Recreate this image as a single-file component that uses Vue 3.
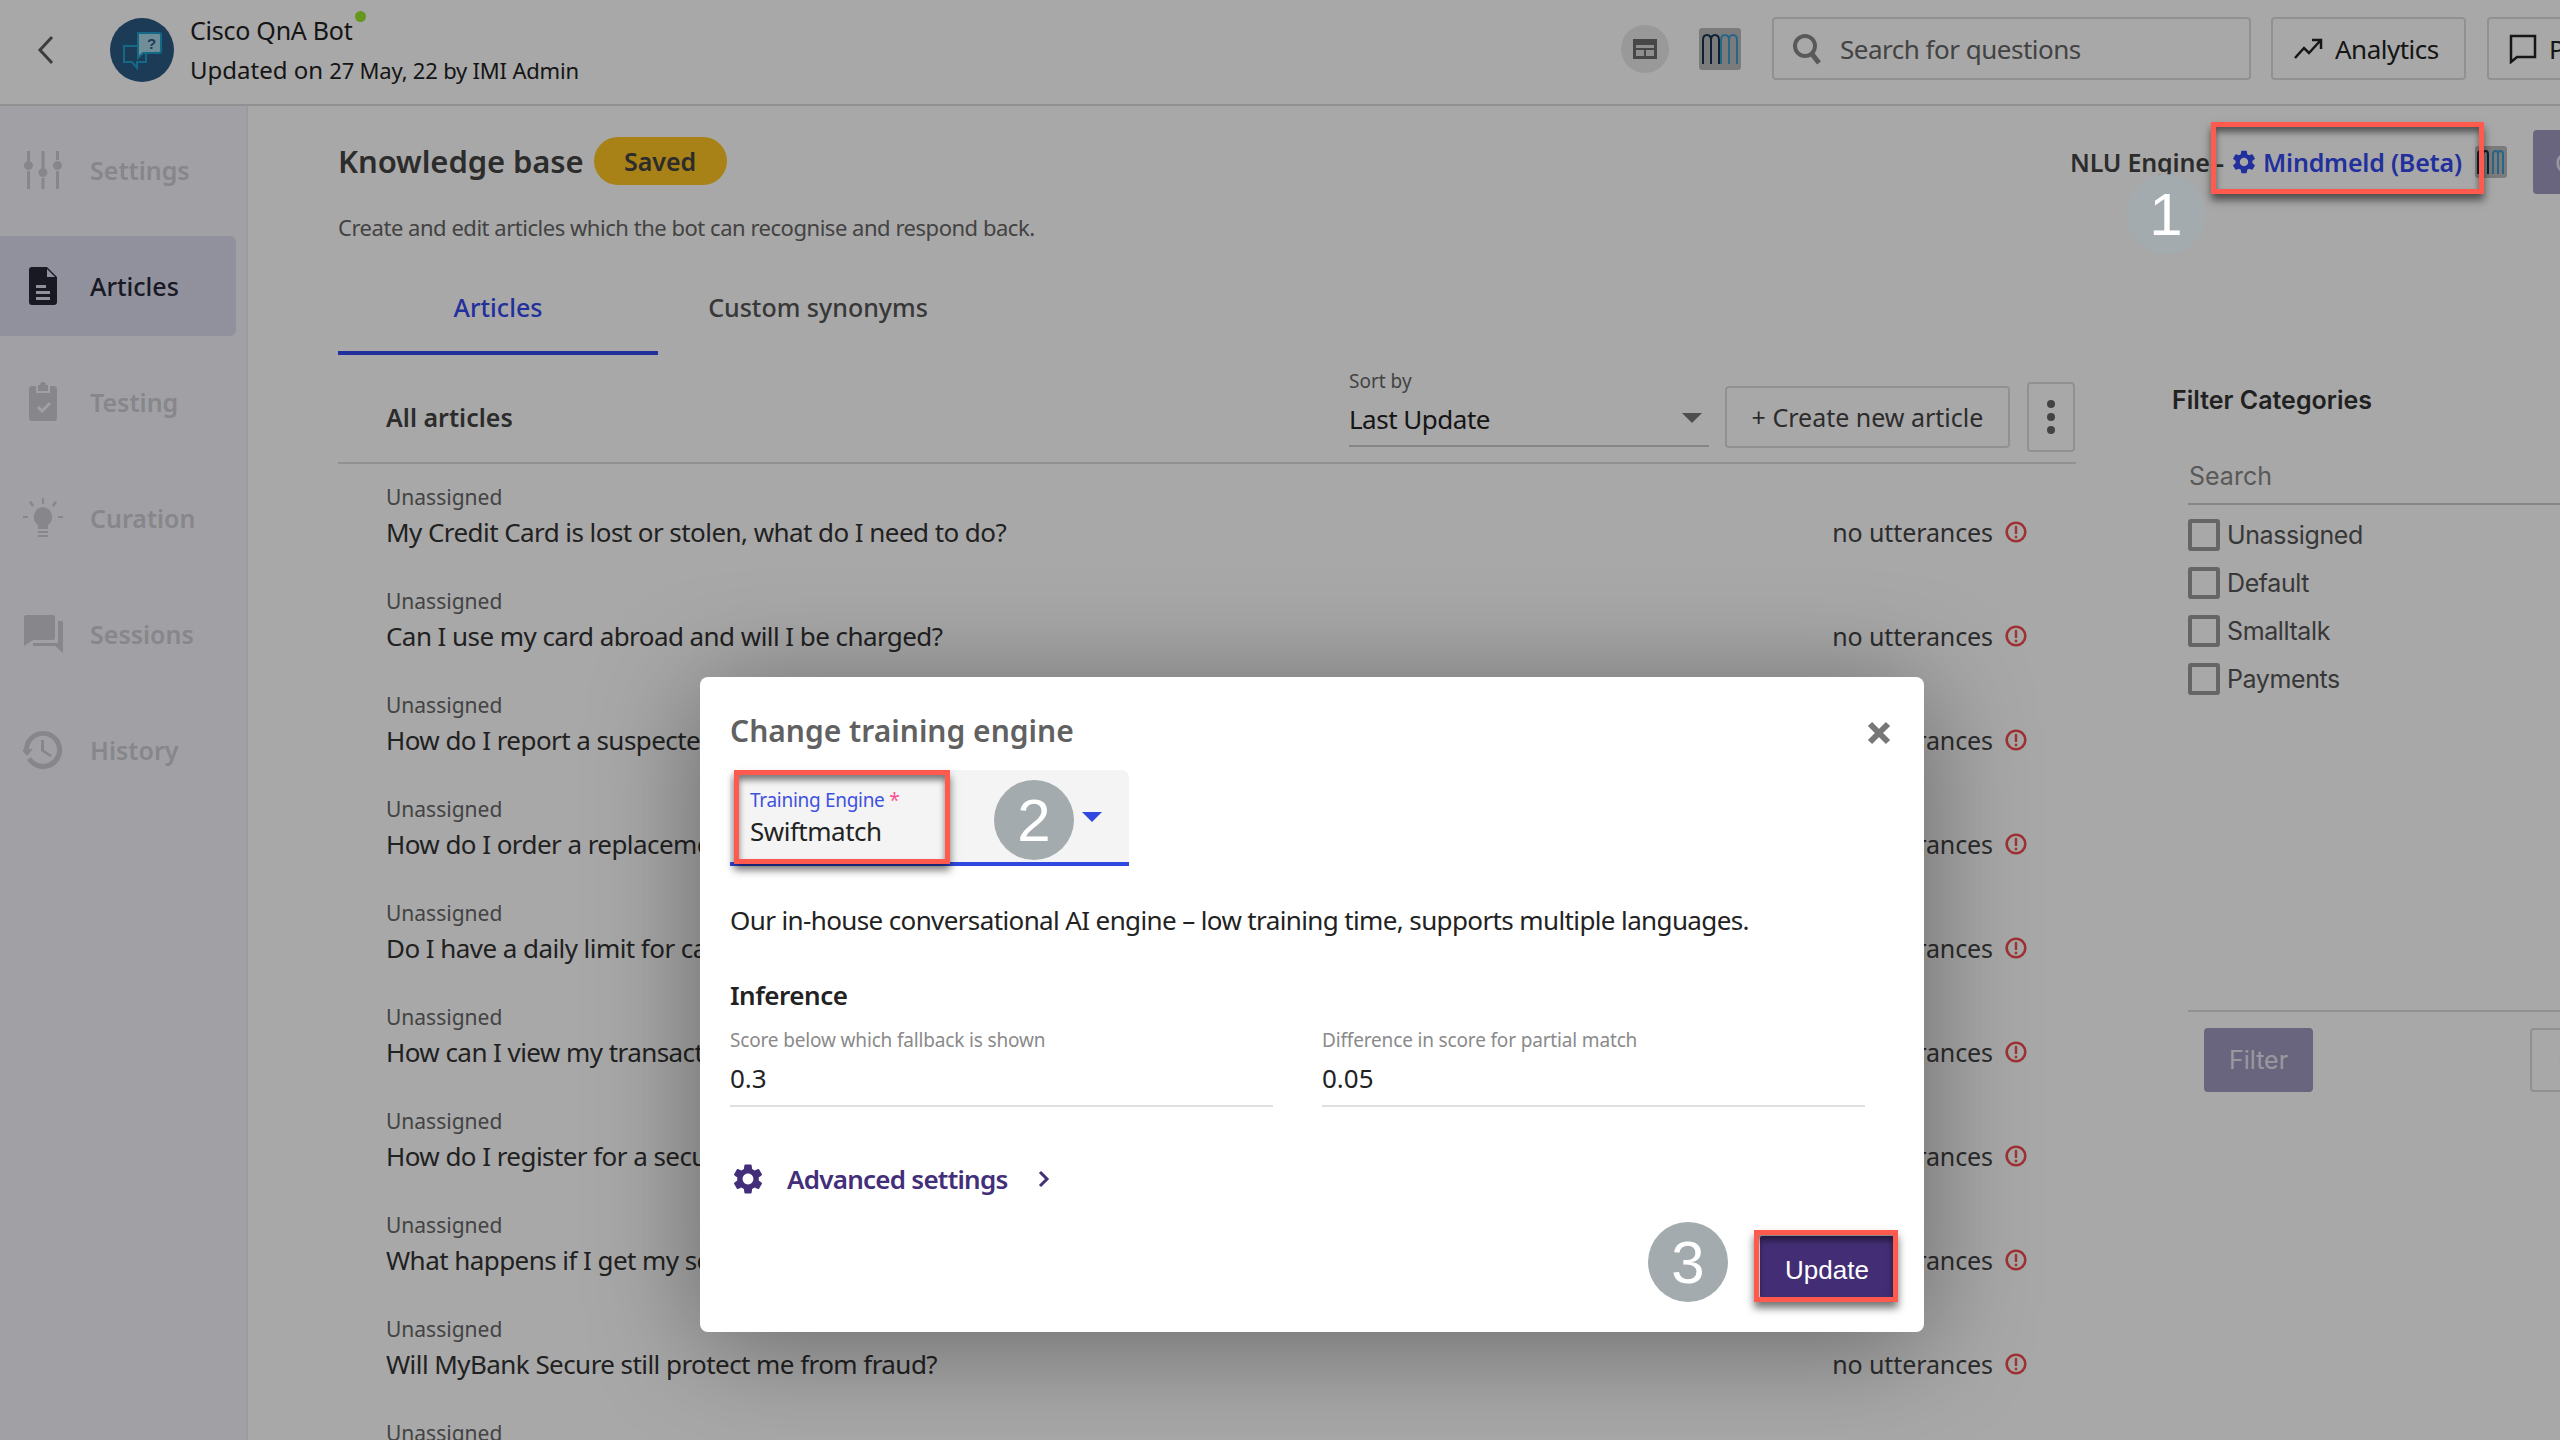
<template>
  <div class="page">
    <header class="topbar">
      <div class="top-left">
        <svg class="back" viewBox="0 0 20 32" width="20" height="32"><path d="M16 3 4 16l12 13" fill="none" stroke="#5d5d5d" stroke-width="3" /></svg>
        <svg class="avatar" viewBox="0 0 64 64" width="64" height="64">
          <circle cx="32" cy="32" r="32" fill="#2a5a85" />
          <path d="M14 28h22v16H27v6l-5-6h-8z" fill="none" stroke="#1ea0cc" stroke-width="2" />
          <path d="M28 15h21a2 2 0 0 1 2 2v16a2 2 0 0 1-2 2H33l-5 5z" fill="#a9d8ea" stroke="#1ea0cc" stroke-width="2" />
          <text x="37" y="31" font-size="15" font-weight="700" fill="#2a5a85" font-family="Liberation Sans">?</text>
        </svg>
        <div class="bot-info">
          <div class="bot-name">Cisco QnA Bot<span class="online"></span></div>
          <div class="bot-sub">Updated on <small>27 May, 22 by IMI Admin</small></div>
        </div>
      </div>
      <div class="top-right">
        <span class="round-icon">
          <svg viewBox="0 0 28 28" width="28" height="28"><path d="M2 4h24v20H2z" fill="#6d6d6d" /><path d="M5 10h18v3H5zM5 15h8v6H5zM15 15h8v6h-8z" fill="#d8d8d8" /></svg>
        </span>
        <svg class="mm" viewBox="0 0 42 42" width="42" height="42">
          <rect width="42" height="42" rx="3" fill="#bbb" />
          <path d="M4 36V12q0-5 4-5t4 5v24M12 12q0-5 4-5t4 5v24" fill="none" stroke="#16324f" stroke-width="2" />
          <path d="M22 36V12q0-5 4-5t4 5v24M30 12q0-5 4-5t4 5v24" fill="none" stroke="#3c9ad0" stroke-width="2" />
        </svg>
        <div class="search-box">
          <svg viewBox="0 0 34 34" width="34" height="34"><circle cx="15" cy="14" r="10" fill="none" stroke="#888" stroke-width="4" /><path d="m22 22 7 9" stroke="#888" stroke-width="5" /></svg>
          <span>Search for questions</span>
        </div>
        <button class="top-btn analytics">
          <svg viewBox="0 0 30 24" width="30" height="24"><path d="m2 21 9-10 5 5L27 4M19 3h9v9" fill="none" stroke="#222" stroke-width="2.5" /></svg>
          Analytics
        </button>
        <button class="top-btn">
          <svg viewBox="0 0 28 30" width="28" height="30"><path d="M2 2h24v21H8l-6 5z" fill="none" stroke="#222" stroke-width="2.5" /></svg>
          Preview
        </button>
      </div>
    </header>

    <div class="body">
      <aside class="sidebar">
        <div v-for="item in navItems" :key="item.name" class="nav-item" :class="{ active: item.active }">
          <span class="nav-icon">
            <svg viewBox="0 0 40 40" width="40" height="40"><path :d="item.icon" fill="currentColor" fill-rule="evenodd" /></svg>
          </span>
          <span>{{ item.name }}</span>
        </div>
      </aside>

      <main class="content">
        <div class="title-row">
          <h1>Knowledge base</h1>
          <span class="saved">Saved</span>
          <div class="engine">
            <span class="engine-label">NLU Engine -</span>
            <svg viewBox="0 0 24 24" width="28" height="28"><path :d="gearPath" fill="#3549ee" /></svg>
            <span class="engine-name">Mindmeld (Beta)</span>
            <svg class="mm-small" viewBox="0 0 32 32" width="32" height="32">
              <rect width="32" height="32" rx="3" fill="#bbb" />
              <path d="M3 28V8q0-3 2.500-3T8 8v20M8 8q0-3 2.500-3T13 8v20" fill="none" stroke="#16324f" stroke-width="2" />
              <path d="M18 28V8q0-3 2.500-3T23 8v20M23 8q0-3 2.500-3T28 8v20" fill="none" stroke="#3c9ad0" stroke-width="2" />
            </svg>
            <button class="train-btn">Confirm</button>
          </div>
        </div>
        <p class="subtitle">Create and edit articles which the bot can recognise and respond back.</p>

        <div class="tabs">
          <div class="tab active">Articles</div>
          <div class="tab">Custom synonyms</div>
        </div>

        <div class="columns">
          <section class="articles">
            <div class="toolbar">
              <span class="all-label">All articles</span>
              <div class="sort">
                <div class="sort-label">Sort by</div>
                <div class="sort-value">Last Update<i class="sort-arrow"></i></div>
              </div>
              <button class="create-btn">+ Create new article</button>
              <button class="more-btn"><i></i><i></i><i></i></button>
            </div>
            <div v-for="(q, i) in questions" :key="i" class="row">
              <div class="row-cat">Unassigned</div>
              <div v-if="q" class="row-line">
                <span class="row-q">{{ q }}</span>
                <span class="no-utt">no utterances</span>
                <svg viewBox="0 0 22 22" width="22" height="22">
                  <circle cx="11" cy="11" r="9.300" fill="none" stroke="#f24c4c" stroke-width="2.600" />
                  <path d="M9.800 5h2.400v8H9.800zM9.800 14.800h2.400v2.400H9.800z" fill="#f24c4c" />
                </svg>
              </div>
            </div>
          </section>

          <section class="filter">
            <h3>Filter Categories</h3>
            <div class="filter-panel">
              <div class="filter-search">Search</div>
              <div class="filter-list">
                <label v-for="c in categories" :key="c" class="check"><i></i>{{ c }}</label>
              </div>
              <div class="filter-foot">
                <button class="filter-btn">Filter</button>
                <button class="clear-btn">Clear</button>
              </div>
            </div>
          </section>
        </div>
      </main>
    </div>

    <div class="backdrop"></div>

    <div class="dialog">
      <h2>Change training engine</h2>
      <svg class="close" viewBox="0 0 24 24" width="24" height="24"><path d="M3 3l18 18M21 3 3 21" stroke="#777" stroke-width="6" /></svg>
      <div class="engine-select">
        <div class="select-label">Training Engine <b>*</b></div>
        <div class="select-value">Swiftmatch</div>
        <i class="select-arrow"></i>
      </div>
      <p class="desc">Our in-house conversational AI engine – low training time, supports multiple languages.</p>
      <div class="section-title">Inference</div>
      <div class="fields">
        <div class="field">
          <div class="field-label">Score below which fallback is shown</div>
          <div class="field-value">0.3</div>
        </div>
        <div class="field">
          <div class="field-label">Difference in score for partial match</div>
          <div class="field-value">0.05</div>
        </div>
      </div>
      <div class="advanced">
        <svg viewBox="0 0 24 24" width="36" height="36"><path :d="gearPath" fill="#432e7a" /></svg>
        <span>Advanced settings</span>
        <svg class="chev" viewBox="0 0 12 18" width="12" height="18"><path d="m2 2 7 7-7 7" fill="none" stroke="#432e7a" stroke-width="3" /></svg>
      </div>
      <div class="dialog-foot">
        <button class="update-btn">Update</button>
      </div>
    </div>

    <!-- annotations on top of the screenshot -->
    <div class="mark mark-1"></div>
    <div class="mark mark-2"></div>
    <div class="mark mark-3"></div>
    <div class="step step-1">1</div>
    <div class="step step-2">2</div>
    <div class="step step-3">3</div>
  </div>
</template>

<script setup>
const gearPath = 'M19.14 12.94c.04-.3.06-.61.06-.94 0-.32-.02-.64-.07-.94l2.03-1.58c.18-.14.23-.41.12-.61l-1.92-3.32c-.12-.22-.37-.29-.59-.22l-2.39.96c-.5-.38-1.03-.7-1.62-.94l-.36-2.54c-.04-.24-.24-.41-.48-.41h-3.84c-.24 0-.43.17-.47.41l-.36 2.54c-.59.24-1.13.57-1.62.94l-2.39-.96c-.22-.08-.47 0-.59.22L2.74 8.87c-.12.21-.08.47.12.61l2.03 1.58c-.05.3-.09.63-.09.94s.02.64.07.94l-2.03 1.58c-.18.14-.23.41-.12.61l1.92 3.32c.12.22.37.29.59.22l2.39-.96c.5.38 1.03.7 1.62.94l.36 2.54c.05.24.24.41.48.41h3.84c.24 0 .44-.17.47-.41l.36-2.54c.59-.24 1.13-.56 1.62-.94l2.39.96c.22.08.47 0 .59-.22l1.92-3.32c.12-.22.07-.47-.12-.61l-2.01-1.58zM12 15.6c-1.98 0-3.6-1.62-3.6-3.6s1.62-3.6 3.6-3.6 3.6 1.62 3.6 3.6-1.62 3.6-3.6 3.6z'

const navItems = [
  {
    name: 'Settings',
    icon: 'M4 1h3v10H4zM5.500 11a4.500 4.500 0 1 1 0 9 4.500 4.500 0 0 1 0-9zM4 21h3v18H4zM18.500 1h3v17h-3zM20 18a4.500 4.500 0 1 1 0 9 4.500 4.500 0 0 1 0-9zM18.500 28h3v11h-3zM33 1h3v9h-3zM34.500 11a4.500 4.500 0 1 1 0 9 4.500 4.500 0 0 1 0-9zM33 21h3v18h-3z',
  },
  {
    name: 'Articles',
    active: true,
    icon: 'M9 1h15l10 10v25a3 3 0 0 1-3 3H9a3 3 0 0 1-3-3V4a3 3 0 0 1 3-3zM24 3v8h8zM13 19v3h10v-3zM13 25v3h14v-3zM13 31v3h14v-3z',
  },
  {
    name: 'Testing',
    icon: 'M20 0a3 3 0 0 1 3 3h2v6H15V3h2a3 3 0 0 1 3-3zM9 4h4v7h14V4h4a3 3 0 0 1 3 3v29a3 3 0 0 1-3 3H9a3 3 0 0 1-3-3V7a3 3 0 0 1 3-3zM14 26l5 5 9-9-2-2-7 7-3-3z',
  },
  {
    name: 'Curation',
    icon: 'M19 0h2v6h-2zM6 4l2-1 3 4-2 2zM32 3l2 1-3 5-2-2zM0 18h5v2H0zM35 18h5v2h-5zM20 9a10 10 0 0 1 5 18v4H15v-4a10 10 0 0 1 5-18zM15 33h10v2H15zM15 37h10v2H15z',
  },
  {
    name: 'Sessions',
    icon: 'M3 1h27a2 2 0 0 1 2 2v21a2 2 0 0 1-2 2H10l-9 6V3a2 2 0 0 1 2-2zM35 7h3a2 2 0 0 1 2 2v30l-8-7H10v-3h25z',
  },
  {
    name: 'History',
    icon: 'M20 1a19 19 0 1 1-16 29l4-3a14 14 0 1 0-2-8h4l-6 7-6-7h3A19 19 0 0 1 20 1zM18 10h3v10l8 5-2 2-9-6z',
  },
]

const questions = [
  'My Credit Card is lost or stolen, what do I need to do?',
  'Can I use my card abroad and will I be charged?',
  'How do I report a suspected fraud?',
  'How do I order a replacement card?',
  'Do I have a daily limit for card payments?',
  'How can I view my transactions?',
  'How do I register for a secure account?',
  'What happens if I get my security question wrong?',
  'Will MyBank Secure still protect me from fraud?',
  '',
]

const categories = ['Unassigned', 'Default', 'Smalltalk', 'Payments']
</script>

<style>
html, body { margin: 0; overflow: hidden; }
</style>

<style scoped>
.page {
  position: relative;
  width: 2560px;
  height: 1440px;
  overflow: hidden;
  background: #fff;
  color: #333;
  font-family: "Noto Sans", "Liberation Sans", sans-serif;
  font-size: 26px;
}
button { font-family: inherit; }

.topbar {
  display: flex;
  height: 104px;
  border-bottom: 2px solid #ddd;
  box-sizing: content-box;
}
.top-left {
  width: 1621px;
  flex-shrink: 0;
  display: flex;
  align-items: center;
  padding: 0 0 4px 36px;
  box-sizing: border-box;
}
.avatar { margin-left: 54px; }
.bot-info { margin-left: 16px; color: #222; }
.bot-name { position: relative; font-size: 25px; line-height: 40px; letter-spacing: -0.25px; }
.online {
  position: absolute;
  margin-left: 3px;
  top: 1px;
  width: 11px;
  height: 11px;
  border-radius: 50%;
  background: #9ae52a;
}
.bot-sub { font-size: 24px; line-height: 40px; }
.bot-sub small { font-size: 22px; letter-spacing: -0.2px; }
.top-right {
  display: flex;
  align-items: center;
  flex-shrink: 0;
  padding-bottom: 7px;
}
.round-icon {
  width: 48px;
  height: 48px;
  border-radius: 50%;
  background: #e8e8e8;
  display: flex;
  align-items: center;
  justify-content: center;
}
.mm { margin-left: 30px; }
.search-box {
  margin-left: 31px;
  width: 479px;
  height: 63px;
  box-sizing: border-box;
  border: 2px solid #ddd;
  border-radius: 4px;
  display: flex;
  align-items: center;
  gap: 16px;
  padding-left: 16px;
  color: #666;
  letter-spacing: -0.5px;
}
.top-btn {
  height: 63px;
  flex-shrink: 0;
  background: #fff;
  border: 2px solid #ddd;
  border-radius: 4px;
  color: #222;
  font-size: 26px;
  letter-spacing: -0.5px;
  display: flex;
  align-items: center;
  gap: 12px;
  padding: 0 20px;
  margin-left: 21px;
}
.analytics { width: 195px; margin-left: 20px; }

.body { display: flex; height: 1334px; }
.sidebar {
  width: 248px;
  flex-shrink: 0;
  background: #f5f5fa;
  border-right: 2px solid #ececf0;
  box-sizing: border-box;
  padding-top: 14px;
}
.nav-item {
  display: flex;
  align-items: center;
  width: 236px;
  height: 100px;
  margin-bottom: 16px;
  color: #ccccd4;
  font-weight: 600;
  font-size: 25px;
}
.nav-item.active {
  background: #dcdcee;
  border-radius: 0 6px 6px 0;
  color: #262638;
  font-weight: 500;
}
.nav-icon { width: 90px; padding-left: 23px; box-sizing: border-box; display: flex; }

.content { flex: 1; min-width: 0; padding: 30px 0 0 90px; }
.title-row { display: flex; align-items: center; height: 50px; }
h1 { margin: 0; font-size: 31px; font-weight: 600; color: #444; white-space: nowrap; letter-spacing: -0.1px; }
.saved {
  margin-left: 10px;
  width: 133px;
  height: 48px;
  border-radius: 24px;
  background: #ffc523;
  color: #444;
  font-size: 25px;
  font-weight: 600;
  display: flex;
  align-items: center;
  justify-content: center;
}
.engine {
  position: absolute;
  top: 130px;
  left: 2070px;
  height: 64px;
  display: flex;
  align-items: center;
  white-space: nowrap;
}
.engine-label { width: 160px; font-weight: 600; color: #444; font-size: 25px; letter-spacing: -0.2px; }
.engine-name { width: 212px; margin-left: 5px; font-weight: 600; color: #3549ee; font-size: 25px; letter-spacing: -0.2px; }
.train-btn {
  margin-left: 26px;
  width: 160px;
  height: 64px;
  background: #a29ac0;
  color: #e8e6f2;
  border: 0;
  border-radius: 4px;
  padding: 0 0 0 22px;
  text-align: left;
  font-size: 25px;
}
.subtitle { margin: 26px 0 0; font-size: 22px; line-height: 30px; color: #666; letter-spacing: -0.47px; }
.tabs { display: flex; height: 93px; margin-top: 20px; }
.tab {
  width: 320px;
  display: flex;
  align-items: center;
  justify-content: center;
  font-weight: 500;
  color: #555;
  border-bottom: 4px solid transparent;
  box-sizing: border-box;
  font-size: 25px;
}
.tab.active { color: #3549ee; border-color: #3549ee; }

.columns { display: flex; gap: 96px; }
.articles { width: 1738px; flex-shrink: 0; }
.toolbar {
  display: flex;
  align-items: center;
  height: 109px;
  box-sizing: border-box;
  padding: 16px 0 0 48px;
  border-bottom: 2px solid #ddd;
}
.all-label { font-weight: 600; color: #444; font-size: 25px; width: 963px; }
.sort { width: 360px; align-self: flex-start; margin-top: -2px; }
.sort-label { font-size: 19px; line-height: 24px; color: #666; }
.sort-value {
  position: relative;
  margin-top: 8px;
  line-height: 36px;
  height: 44px;
  border-bottom: 2px solid #ccc;
  color: #222;
  letter-spacing: -0.5px;
}
.sort-arrow {
  position: absolute;
  right: 7px;
  top: 12px;
  border-left: 10px solid transparent;
  border-right: 10px solid transparent;
  border-top: 10px solid #777;
}
.create-btn {
  margin-left: 16px;
  width: 285px;
  height: 62px;
  background: #fff;
  border: 2px solid #ddd;
  border-radius: 4px;
  font-size: 25px;
  color: #444;
  padding: 0;
}
.more-btn {
  margin-left: 17px;
  width: 48px;
  height: 70px;
  background: #fff;
  border: 2px solid #ddd;
  border-radius: 4px;
  display: flex;
  flex-direction: column;
  align-items: center;
  justify-content: center;
  gap: 5px;
  padding: 0;
}
.more-btn i { width: 8px; height: 8px; border-radius: 50%; background: #666; }
.row { height: 104px; padding-left: 48px; padding-right: 49px; padding-top: 18px; box-sizing: border-box; }
.row-cat { font-size: 21px; line-height: 30px; color: #666; }
.row-line { display: flex; align-items: center; line-height: 40px; color: #333; }
.row-q { letter-spacing: -0.56px; }
.no-utt { margin-left: auto; margin-right: 12px; color: #444; font-size: 25px; letter-spacing: -0.1px; }

.filter { width: 500px; flex-shrink: 0; padding-top: 30px; }
.filter h3 {
  margin: 0;
  font-family: Inter, sans-serif;
  font-size: 25px;
  font-weight: 600;
  line-height: 30px;
  color: #333;
}
.filter-panel {
  margin-top: 6px;
  height: 687px;
  display: flex;
  flex-direction: column;
  padding-left: 16px;
  font-family: Inter, sans-serif;
  font-size: 25px;
}
.filter-search {
  height: 84px;
  box-sizing: border-box;
  padding: 40px 0 0 1px;
  line-height: 30px;
  color: #888;
  border-bottom: 2px solid #ccc;
}
.filter-list { display: flex; flex-direction: column; gap: 16px; margin-top: 14px; }
.check { display: flex; align-items: center; gap: 7px; height: 32px; color: #555; letter-spacing: -0.4px; }
.check i {
  width: 32px;
  height: 32px;
  box-sizing: border-box;
  border: 4px solid #999;
  border-radius: 3px;
}
.filter-foot {
  margin-top: auto;
  height: 98px;
  box-sizing: border-box;
  display: flex;
  border-top: 2px solid #ddd;
  padding: 16px 0 0 16px;
}
.filter-btn, .clear-btn {
  height: 64px;
  border-radius: 4px;
  font-family: Inter, sans-serif;
  font-size: 25px;
}
.filter-btn { width: 109px; background: #a29ac0; color: #e8e6f2; border: 0; }
.clear-btn {
  margin-left: 217px;
  width: 120px;
  flex-shrink: 0;
  background: #fff;
  border: 2px solid #ddd;
  color: #222;
}

.backdrop {
  position: absolute;
  inset: 0;
  background: rgba(0, 0, 0, 0.34);
}

.dialog {
  position: absolute;
  left: 700px;
  top: 677px;
  width: 1224px;
  height: 655px;
  box-sizing: border-box;
  padding: 36px 30px 0;
  background: #fff;
  border-radius: 8px;
  box-shadow: 0 12px 110px rgba(0, 0, 0, 0.38);
  color: #222;
}
.dialog h2 {
  margin: 0;
  font-size: 30px;
  font-weight: 600;
  line-height: 36px;
  color: #616161;
}
.close { position: absolute; right: 33px; top: 44px; }
.engine-select {
  position: relative;
  margin-top: 21px;
  width: 399px;
  height: 96px;
  box-sizing: border-box;
  padding: 18px 0 0 20px;
  background: #f4f4f4;
  border-bottom: 4px solid #3048e0;
  border-radius: 8px 8px 0 0;
}
.select-label { font-size: 19px; line-height: 24px; color: #3f51e0; letter-spacing: -0.3px; }
.select-label b { color: #ff4d8d; font-weight: 400; }
.select-value { margin-top: 1px; line-height: 36px; letter-spacing: -0.5px; }
.select-arrow {
  position: absolute;
  right: 27px;
  top: 42px;
  border-left: 10px solid transparent;
  border-right: 10px solid transparent;
  border-top: 10px solid #3048e0;
}
.desc { margin: 37px 0 0; line-height: 34px; letter-spacing: -0.62px; }
.section-title { margin-top: 41px; line-height: 34px; font-weight: 600; letter-spacing: -0.5px; }
.fields { display: flex; gap: 49px; margin-top: 16px; }
.field { width: 543px; border-bottom: 2px solid #e0e0e0; padding-bottom: 9px; }
.field-label { font-size: 19px; line-height: 24px; color: #8a8a8a; letter-spacing: -0.16px; }
.field-value { margin-top: 8px; line-height: 36px; }
.advanced {
  display: flex;
  align-items: center;
  height: 40px;
  margin-top: 52px;
  color: #432e7a;
  font-weight: 600;
  letter-spacing: -0.75px;
}
.advanced span { margin-left: 21px; }
.chev { margin-left: 30px; }
.dialog-foot { display: flex; justify-content: flex-end; margin-top: 37px; }
.update-btn {
  width: 134px;
  height: 62px;
  border: 0;
  border-radius: 2px;
  background: #432e75;
  color: #fff;
  font-size: 26px;
  padding-top: 8px;
  font-family: "Liberation Sans", sans-serif;
}

.mark {
  position: absolute;
  box-sizing: border-box;
  border: 5px solid #ff5a4d;
  box-shadow: 0 6px 8px rgba(0, 0, 0, 0.55), inset 0 5px 6px rgba(0, 0, 0, 0.5);
}
.mark-1 { left: 2211px; top: 122px; width: 273px; height: 72px; }
.mark-2 { left: 734px; top: 770px; width: 216px; height: 94px; }
.mark-3 { left: 1754px; top: 1230px; width: 144px; height: 72px; }
.step {
  position: absolute;
  width: 80px;
  height: 80px;
  border-radius: 50%;
  background: #a3abae;
  color: #fff;
  font-family: "Liberation Sans", sans-serif;
  font-size: 60px;
  display: flex;
  align-items: center;
  justify-content: center;
}
.step-1 { left: 2126px; top: 174px; }
.step-2 { left: 994px; top: 780px; }
.step-3 { left: 1648px; top: 1222px; }
</style>
